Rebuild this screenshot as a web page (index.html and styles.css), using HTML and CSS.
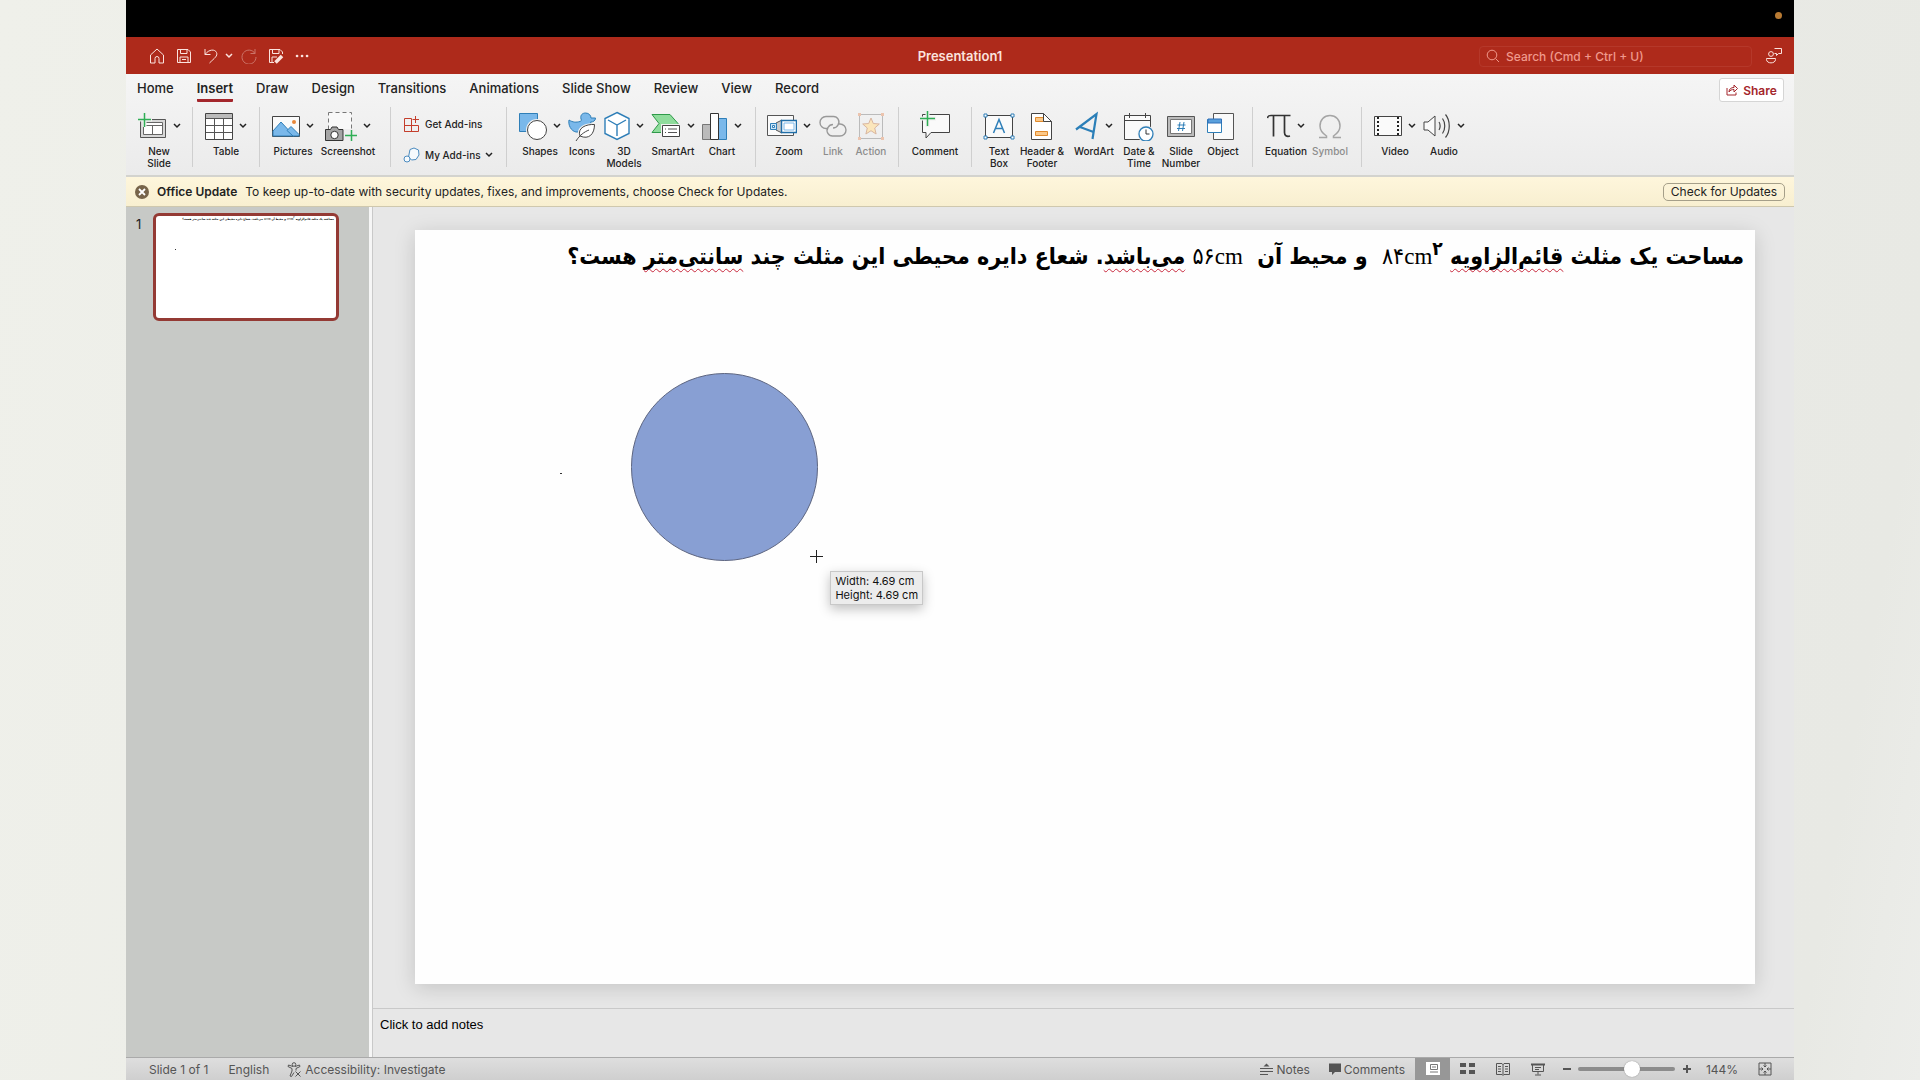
FILE: index.html
```html
<!DOCTYPE html>
<html lang="en">
<head>
  <meta charset="UTF-8">
  <title>Presentation1</title>
  <link rel="stylesheet" href="styles.css">
</head>
<body>
  <svg class="defs" aria-hidden="true">
    <symbol id="chev" viewBox="0 0 8 6"><path d="M1 1l3 3 3-3" fill="none" stroke="currentColor" stroke-width="1.5"/></symbol>
  </svg>

  <div class="app">
    <div class="menubar"><span class="mic-dot"></span></div>

    <header class="titlebar">
      <div class="quick">
        <button aria-label="Home"><svg width="16" height="16" viewBox="0 0 16 16"><path d="M1.500 7L8 1l6.500 6v8H10V10.500a2 2 0 0 0-4 0V15H1.500z"/></svg></button>
        <button aria-label="Save"><svg width="16" height="16" viewBox="0 0 16 16"><path d="M1.500 1.500h10.500l2.500 2.500v10.500h-13zM4.500 1.500v4h6.500v-4M4 14.500V9h8v5.500M6 11.500h4"/></svg></button>
        <button aria-label="Undo"><svg width="16" height="16" viewBox="0 0 16 16"><path d="M2 1v5.500h5.500M2 6.500C6 1 12 1 13.500 4.500S11.500 10 6.500 15"/></svg></button>
        <button class="q-chev" aria-label="Undo list"><svg width="8" height="6"><use href="#chev"/></svg></button>
        <button class="dim" aria-label="Redo"><svg width="16" height="16" viewBox="0 0 16 16"><path d="M14 1v4.500H9.500M14 5.500A7 7 0 1 0 15 9"/></svg></button>
        <button aria-label="Save as"><svg width="16" height="16" viewBox="0 0 16 16"><path d="M6 14.500H1.500v-13H12L14.500 4v2M4.500 1.500v4H11v-4M4 14.500V9h5"/><path d="M7.500 14.500L14 8" stroke-width="3.500"/></svg></button>
        <button aria-label="More"><svg width="14" height="16" viewBox="0 0 14 16"><path d="M2 8h.1M7 8h.1M12 8h.1" stroke-width="2.600" stroke-linecap="round"/></svg></button>
      </div>
      <h1>Presentation1</h1>
      <div class="title-right">
        <label class="search">
          <svg width="14" height="14" viewBox="0 0 14 14"><circle cx="6" cy="6" r="4.800"/><path d="M9.500 9.500L13 13"/></svg>
          <input type="text" placeholder="Search (Cmd + Ctrl + U)" aria-label="Search">
        </label>
        <button aria-label="Presence"><svg width="18" height="18" viewBox="0 0 18 18"><circle cx="6" cy="7" r="2.400"/><path d="M1.500 11.500h9v1c0 4.500-9 4.500-9 0zM9.500 1.500h7v5h-3l-2 2v-2h-2"/></svg></button>
      </div>
    </header>

    <div class="ribbon">
      <div class="tab-row">
        <nav class="tabs">
          <a href="#">Home</a>
          <a href="#" class="active">Insert</a>
          <a href="#">Draw</a>
          <a href="#">Design</a>
          <a href="#">Transitions</a>
          <a href="#">Animations</a>
          <a href="#">Slide Show</a>
          <a href="#">Review</a>
          <a href="#">View</a>
          <a href="#">Record</a>
        </nav>
        <button class="share"><svg width="12" height="12" viewBox="0 0 12 12"><path d="M1 4v7h9V8.500M3 8c0-3 2-4.500 5-4.500V1l3.500 3.500L8 8V5.500C6 5.500 4 6 3 8z"/></svg>Share</button>
      </div>

      <div class="tools">
        <div class="group">
          <button class="tool">
            <span class="ico"><svg width="30" height="30" viewBox="0 0 30 30"><path d="M3.500 8.500h25v18h-25z" fill="#d8d8d8" stroke="#555"/><path d="M6.500 11.500h19v12h-19z" fill="#fff" stroke="#666"/><path d="M6 14.500h20M15.500 14v10" stroke="#666"/><path d="M0 8.500h15M7.500 1v15" stroke="#f0f0f0" stroke-width="4"/><path d="M1 8.500h13M7.500 2v14" stroke="#2fae55" stroke-width="1.500"/></svg><svg class="chev"><use href="#chev"/></svg></span>
            <span class="lbl">New<br>Slide</span>
          </button>
        </div>
        <div class="group">
          <button class="tool">
            <span class="ico"><svg width="28" height="30" viewBox="0 0 28 30"><path d="M.5 2.500h27v26H.5z" fill="#fff" stroke="#444"/><path d="M1 3h26v4H1z" fill="#bbb"/><path d="M1 7.500h26M1 14.500h26M1 21.500h26M9.500 7v21M18.500 7v21" stroke="#555"/></svg><svg class="chev"><use href="#chev"/></svg></span>
            <span class="lbl">Table</span>
          </button>
        </div>
        <div class="group">
          <button class="tool">
            <span class="ico"><svg width="28" height="30" viewBox="0 0 28 30"><path d="M.5 5.500h27v20H.5z" fill="#fafafa" stroke="#444"/><path d="M1 20l8-9 13 14H1z" fill="#7ab8ea" stroke="#2f7fb8"/><path d="M15 19.500l4-4 8 8v1.500h-6z" fill="#7ab8ea" stroke="#2f7fb8"/><circle cx="22" cy="11" r="2" fill="#e8873a"/></svg><svg class="chev"><use href="#chev"/></svg></span>
            <span class="lbl">Pictures</span>
          </button>
          <button class="tool xl">
            <span class="ico"><svg width="32" height="30" viewBox="0 0 32 30"><path d="M3.500 1.500h23v24h-23z" fill="#f8f8f8" stroke="#777" stroke-dasharray="4 3"/><path d="M.5 18.500h5l1.500-2.500h5l1.500 2.500h4.500v11H.5z" fill="#a5a5a5" stroke="#333"/><circle cx="9.500" cy="24" r="3.700" fill="#fff" stroke="#333"/><path d="M19 18h13v12H19z" fill="#eee"/><path d="M20 24.500h12M26.500 19v11" stroke="#2fae55" stroke-width="1.500"/></svg><svg class="chev"><use href="#chev"/></svg></span>
            <span class="lbl">Screenshot</span>
          </button>
        </div>
        <div class="group addins">
          <button><svg width="18" height="18" viewBox="0 0 18 18"><path d="M1.500 3.500h7v13h-7zM1.500 10.500h14v6h-14M8.500 10v6.500M12.500 1v7M9.500 4.500h6.500" stroke="#c43e2c" fill="none"/></svg>Get Add-ins</button>
          <button><svg width="18" height="18" viewBox="0 0 18 18"><path d="M7 3.500L11 2l4.500 2L16 9l-3 4.500-4.500.5-3-3z" stroke="#4b8bbf" fill="#f6fafd"/><circle cx="4" cy="13" r="3" stroke="#4b8bbf" fill="#f6fafd"/></svg>My Add-ins<svg class="chev"><use href="#chev"/></svg></button>
        </div>
        <div class="group">
          <button class="tool">
            <span class="ico"><svg width="28" height="30" viewBox="0 0 28 30"><path d="M.5 2.500h18v18H.5z" fill="#7ab8ea" stroke="#2f7fb8"/><circle cx="18" cy="19" r="11" fill="#f0f0f0"/><circle cx="18" cy="19" r="9.500" fill="#fff" stroke="#444"/></svg><svg class="chev"><use href="#chev"/></svg></span>
            <span class="lbl">Shapes</span>
          </button>
          <button class="tool sm">
            <span class="ico"><svg width="28" height="30" viewBox="0 0 28 30"><path d="M1 9c4 2.500 7 2.500 11 1.500C13 10 14 9.500 13 8c-1-4 1.500-6 4.500-6C21 2 23 4.500 23 7h4.500c0 3-2.500 4-5 4 2 3 .5 8-3 10H8C3 20 0 14 1 9z" fill="#7ab8ea" stroke="#2f7fb8"/><path d="M9 29l3-4c-3-8 6-12 15.500-11.500C27.500 23 22 29 12 25" fill="#fff" stroke="#f0f0f0" stroke-width="3"/><path d="M8 30c4-6 8-9 13-11M12 25c-3-8 6-12 14.500-11.500C26.500 23 21 29 12 25z" fill="#fff" stroke="#444"/></svg></span>
            <span class="lbl">Icons</span>
          </button>
          <button class="tool">
            <span class="ico"><svg width="26" height="30" viewBox="0 0 26 30"><path d="M13 1.500L25 7.500v15l-12 6-12-6v-15z" fill="#fff" stroke="#2f7fb8" stroke-width="1.400"/><path d="M4 9l9 5 9-5M13 14v11" fill="none" stroke="#2f7fb8" stroke-width="1.400"/></svg><svg class="chev"><use href="#chev"/></svg></span>
            <span class="lbl">3D<br>Models</span>
          </button>
          <button class="tool lg">
            <span class="ico"><svg width="30" height="30" viewBox="0 0 30 30"><path d="M1 3.500h18l8 9-8 9H1l7-9z" fill="#8fdc9c" stroke="#2f9a4a"/><path d="M10 13h20v14H10z" fill="#f0f0f0"/><path d="M11.500 14.500h17v11h-17z" fill="#fff" stroke="#444"/><path d="M14 18h1M17 18h9M14 21.500h1M17 21.500h9" stroke="#555"/></svg><svg class="chev"><use href="#chev"/></svg></span>
            <span class="lbl">SmartArt</span>
          </button>
          <button class="tool">
            <span class="ico"><svg width="26" height="30" viewBox="0 0 26 30"><path d="M.5 13.500h8v15h-8z" fill="#bbb" stroke="#777"/><path d="M16.500 7.500h8v21h-8z" fill="#7ab8ea" stroke="#2f7fb8"/><path d="M8.500 2.500h8v26h-8z" fill="#fff" stroke="#333"/></svg><svg class="chev"><use href="#chev"/></svg></span>
            <span class="lbl">Chart</span>
          </button>
        </div>
        <div class="group">
          <button class="tool">
            <span class="ico"><svg width="30" height="30" viewBox="0 0 30 30"><path d="M.5 4.500h26v20H.5z" fill="#fafafa" stroke="#555"/><path d="M9 12l6-3v13l-6-3z" fill="#ccc" stroke="#555"/><path d="M3.500 12.500h6v6h-6z" fill="#cde5f7" stroke="#2f7fb8"/><path d="M5.500 14.500h2v2h-2z" fill="#fff" stroke="#2f7fb8"/><path d="M14.500 9.500h15v12h-15z" fill="#fff" stroke="#1f6ea8" stroke-width="1.500"/><path d="M17 12h10v7H17z" fill="#fff" stroke="#7ab8ea"/></svg><svg class="chev"><use href="#chev"/></svg></span>
            <span class="lbl">Zoom</span>
          </button>
          <button class="tool mid" disabled>
            <span class="ico"><svg width="28" height="30" viewBox="0 0 28 30"><path d="M9 17.500H7A5.500 5.500 0 0 1 7 5.500h7a5.500 5.500 0 0 1 5 8.500c-1 2-2.500 3-5 3M19 13h2a5.500 5.500 0 0 1 0 12h-7a5.500 5.500 0 0 1-5-8.500c1-2 2.500-3 5-3" fill="none" stroke="#999" stroke-width="1.400"/></svg></span>
            <span class="lbl">Link</span>
          </button>
          <button class="tool xs" disabled>
            <span class="ico"><svg width="28" height="30" viewBox="0 0 28 30"><path d="M2.500 3.500h23v24h-23z" fill="none" stroke="#bbb"/><path d="M1 2h3v3H1zM24 2h3v3h-3zM1 26h3v3H1zM24 26h3v3h-3z" fill="#ecc4ae"/><path d="M14 7l2.300 5.500 6 .5-4.600 4 1.400 6-5.100-3.300L8.900 23l1.400-6-4.600-4 6-.5z" fill="#fbe6bb" stroke="#d9b6a0"/></svg></span>
            <span class="lbl">Action</span>
          </button>
        </div>
        <div class="group">
          <button class="tool lg">
            <span class="ico"><svg width="30" height="30" viewBox="0 0 30 30"><path d="M2.500 3.500h27v18H11l-5 5.500v-5.500H2.500z" fill="#fafafa" stroke="#444"/><path d="M0 7.500h16M7.500 0v16" stroke="#f0f0f0" stroke-width="4"/><path d="M0 7.500h15M7.500 0v15" stroke="#2fae55" stroke-width="1.500"/></svg></span>
            <span class="lbl">Comment</span>
          </button>
        </div>
        <div class="group">
          <button class="tool xs">
            <span class="ico"><svg width="32" height="30" viewBox="0 0 32 30"><path d="M2.500 4.500h27v22h-27z" fill="#fafafa" stroke="#444"/><path d="M1 3h3v3H1zM28 3h3v3h-3zM1 25h3v3H1zM28 25h3v3h-3z" fill="#fff" stroke="#2f7fb8"/><path d="M10.500 22L16 8.500 21.500 22M12.500 17.500h7" fill="none" stroke="#2f7fb8" stroke-width="1.500"/></svg></span>
            <span class="lbl">Text<br>Box</span>
          </button>
          <button class="tool lg">
            <span class="ico"><svg width="22" height="30" viewBox="0 0 22 30"><path d="M.5 2.500h12l8 8v18H.5z" fill="#fff" stroke="#444"/><path d="M4.500 6.500h8v4h-8zM4.500 20.500h12v4h-12z" fill="#fbc889" stroke="#e08a2c"/><path d="M12.500 2.500v8h8z" fill="#fff" stroke="#444"/></svg></span>
            <span class="lbl">Header &amp;<br>Footer</span>
          </button>
          <button class="tool lg">
            <span class="ico"><svg width="24" height="30" viewBox="0 0 24 30"><path d="M1 18.500L21.500 3 17.500 28M5 16l13.500 5" fill="none" stroke="#2b7fb8" stroke-width="2.200"/></svg><svg class="chev"><use href="#chev"/></svg></span>
            <span class="lbl">WordArt</span>
          </button>
          <button class="tool sm">
            <span class="ico"><svg width="30" height="30" viewBox="0 0 30 30"><path d="M.5 4.500h26v24H.5z" fill="#fafafa" stroke="#444"/><path d="M.5 9.500h26M5.500 2v5M21.500 2v5" stroke="#444"/><circle cx="22" cy="23" r="8.500" fill="#f0f0f0"/><circle cx="22" cy="23" r="7" fill="#fff" stroke="#2f7fb8" stroke-width="1.300"/><path d="M22 18.500V23h3.500" fill="none" stroke="#333"/></svg></span>
            <span class="lbl">Date &amp;<br>Time</span>
          </button>
          <button class="tool">
            <span class="ico"><svg width="28" height="30" viewBox="0 0 28 30"><path d="M.5 5.500h27v20H.5z" fill="#bbb" stroke="#555"/><path d="M3.500 8.500h21v14h-21z" fill="#fff" stroke="#777"/><path d="M13 11l-1.500 9M17 11l-1.500 9M10.500 14h8M10 17.500h8" stroke="#2f7fb8"/></svg></span>
            <span class="lbl">Slide<br>Number</span>
          </button>
          <button class="tool sm">
            <span class="ico"><svg width="32" height="30" viewBox="0 0 32 30"><path d="M6.500 2.500h20v26h-20z" fill="#fafafa" stroke="#555"/><path d="M.5 8.500h14v13H.5z" fill="#fff" stroke="#2f7fb8"/><path d="M1 8h13.500v4H1z" fill="#5aa0dc" stroke="#2f6fb8"/></svg></span>
            <span class="lbl">Object</span>
          </button>
        </div>
        <div class="group">
          <button class="tool">
            <span class="ico"><svg width="24" height="30" viewBox="0 0 24 30"><path d="M.5 7C1 4.500 2 4.500 4 4.500h19.500M6.500 5v20.500M17.500 5v16.500c0 3 2 4.500 5.500 3.500" fill="none" stroke="#333" stroke-width="1.700"/></svg><svg class="chev"><use href="#chev"/></svg></span>
            <span class="lbl">Equation</span>
          </button>
          <button class="tool mid" disabled>
            <span class="ico"><svg width="24" height="30" viewBox="0 0 24 30"><path d="M1 26.500h7.500V25C4 22 2 18.500 2 15 2 9 6 4.500 12 4.500S22 9 22 15c0 3.500-2 7-6.500 10v1.500H23" fill="none" stroke="#a5a5a5" stroke-width="1.500"/></svg></span>
            <span class="lbl">Symbol</span>
          </button>
        </div>
        <div class="group last">
          <button class="tool">
            <span class="ico"><svg width="28" height="30" viewBox="0 0 28 30"><path d="M.5 5.500h27v19H.5z" fill="#fafafa" stroke="#444"/><path d="M4 6v18M24 6v18" stroke="#222" stroke-width="2" stroke-dasharray="2 2"/></svg><svg class="chev"><use href="#chev"/></svg></span>
            <span class="lbl">Video</span>
          </button>
          <button class="tool lg">
            <span class="ico"><svg width="28" height="30" viewBox="0 0 28 30"><path d="M1 11h4l7-6v20l-7-6H1z" fill="#fafafa" stroke="#444"/><path d="M16 11c1.500 2 1.500 6 0 8M19.500 7.500c3 4 3 11 0 15M22.500 3.500c5 6 5 17 0 23" fill="none" stroke="#444" stroke-width="1.200"/></svg><svg class="chev"><use href="#chev"/></svg></span>
            <span class="lbl">Audio</span>
          </button>
        </div>
      </div>
    </div>

    <div class="message">
      <button class="close" aria-label="Close"><svg width="14" height="14" viewBox="0 0 14 14"><circle cx="7" cy="7" r="7" fill="#77644a"/><path d="M4 4l6 6M10 4l-6 6" stroke="#fff" stroke-width="1.800"/></svg></button>
      <b>Office Update</b>
      <span>To keep up-to-date with security updates, fixes, and improvements, choose Check for Updates.</span>
      <button class="check">Check for Updates</button>
    </div>

    <div class="workspace">
      <aside class="sidebar">
        <span class="num">1</span>
        <div class="thumb">
          <p class="question" dir="rtl" lang="fa">مساحت یک مثلث قائم‌الزاویه <span class="unit" dir="ltr">۸۴cm<sup>۲</sup></span> و محیط آن <span class="unit" dir="ltr">۵۶cm</span> می‌باشد. شعاع دایره محیطی این مثلث چند سانتی‌متر هست؟</p>
          <span class="speck"></span>
        </div>
      </aside>

      <main class="main">
        <div class="stage">
          <div class="slide">
            <p class="question" dir="rtl" lang="fa">مساحت یک مثلث <u>قائم‌الزاویه</u> <span class="unit" dir="ltr">۸۴cm<sup>۲</sup></span>&nbsp; و محیط آن &nbsp;<span class="unit" dir="ltr">۵۶cm</span> <u>می‌باشد</u>. شعاع دایره محیطی این مثلث چند <u>سانتی‌متر</u> هست؟</p>
            <span class="speck"></span>
            <div class="circle"></div>
            <svg class="cross" viewBox="0 0 13 13"><path d="M6.500 0v13M0 6.500h13" stroke="#222"/></svg>
            <div class="size-tip">Width: 4.69 cm<br>Height: 4.69 cm</div>
          </div>
        </div>
        <div class="notes">Click to add notes</div>
      </main>
    </div>

    <footer class="status">
      <span class="count">Slide 1 of 1</span>
      <button class="lang">English</button>
      <button class="access"><svg width="15" height="15" viewBox="0 0 15 15"><circle cx="7" cy="2.500" r="1.800"/><path d="M6 4.500L1.500 3 1 4.500l4 2V9l-2 5 1.500.5 2.500-4M8 4.500L12.500 3l.5 1.500-4 2v2M8.500 9.500l5 5M13.500 9.500l-5 5"/></svg>Accessibility: Investigate</button>
      <div class="right">
        <button class="st-notes"><svg width="13" height="13" viewBox="0 0 13 13"><path d="M0 5.500h13M0 8.500h13M0 11.500h8" /><path d="M3.500 3.500l3-3 3 3z" fill="#555" stroke="none"/></svg>Notes</button>
        <button class="st-comm"><svg width="12" height="12" viewBox="0 0 12 12"><path d="M0 .5h12v8.500H6L3 12V9H0z" fill="#555" stroke="none"/></svg>Comments</button>
        <button class="view on" aria-label="Normal"><svg width="14" height="14" viewBox="0 0 14 14"><path d="M0 0h14v13H0z" fill="#fff" stroke="none"/><path d="M4.500 2.500h7v5h-7zM4 10h8" stroke="#777"/><path d="M6 5h4" stroke="#777"/></svg></button>
        <button class="view" aria-label="Slide sorter"><svg width="15" height="12" viewBox="0 0 15 12"><path d="M0 0h6v4H0zM9 0h6v4H9zM0 7h6v4H0zM9 7h6v4H9z" fill="#555" stroke="none"/></svg></button>
        <button class="view" aria-label="Reading view"><svg width="14" height="13" viewBox="0 0 14 13"><path d="M.5.5H6l1 1 1-1h5.500v11H8l-1 1-1-1H.5zM7 1v11M2 3.500h3M2 6h3M2 8.500h3M9 3.500h3M9 6h3M9 8.500h3"/></svg></button>
        <button class="view" aria-label="Slide show"><svg width="14" height="13" viewBox="0 0 14 13"><path d="M0 1.500h14" stroke-width="2"/><path d="M1.500 2v6.500h11V2M4 4.500h6M4 6.500h4M7 8.500v3M4 12h6"/></svg></button>
        <button class="zoom-btn" aria-label="Zoom out"><svg width="8" height="8" viewBox="0 0 8 8"><path d="M0 4h8" stroke-width="2"/></svg></button>
        <input type="range" min="0" max="100" value="57" aria-label="Zoom">
        <button class="zoom-btn" aria-label="Zoom in"><svg width="8" height="8" viewBox="0 0 8 8"><path d="M0 4h8M4 0v8" stroke-width="2"/></svg></button>
        <button class="pct">144%</button>
        <button class="fit" aria-label="Fit slide"><svg width="14" height="14" viewBox="0 0 14 14"><path d="M1 1h12v12H1zM7 1v4M7 9v4M1 7h4M9 7h4M5.500 3.500L7 5l1.500-1.500M5.500 10.500L7 9l1.500 1.500M3.500 5.500L5 7 3.500 8.500M10.500 5.500L9 7l1.500 1.500"/></svg></button>
      </div>
    </footer>
  </div>
</body>
</html>
```

FILE: styles.css
```css
* {
  box-sizing: border-box;
}
body {
  margin: 0;
  padding: 0 126px;
  height: 100vh;
  background: linear-gradient(100deg, #eff0ea 0%, #ebece7 50%, #e8e9e4 94%, #ecedea 100%);
  font-family: Inter, "Noto Sans", sans-serif;
  font-size: 12px;
  color: #222;
  overflow: hidden;
}
button, input {
  font: inherit;
  color: inherit;
  border: none;
  background: none;
  padding: 0;
}
svg {
  flex: none;
}
.defs {
  position: absolute;
  width: 0;
  height: 0;
}
.app {
  height: 100%;
  display: flex;
  flex-direction: column;
}

/* top strip */
.menubar {
  height: 37px;
  background: #000;
  display: flex;
  justify-content: flex-end;
  align-items: center;
  padding: 0 12px 6px;
}
.mic-dot {
  width: 7px;
  height: 7px;
  border-radius: 50%;
  background: #b87a33;
}
.titlebar {
  height: 37px;
  background: #ae2a1b;
  display: grid;
  grid-template-columns: 1fr auto 1fr;
  align-items: center;
  padding: 1px 11px 0 23px;
  color: #fbe3de;
}
.titlebar svg {
  display: block;
  fill: none;
  stroke: currentColor;
  stroke-width: 1;
}
.titlebar h1 {
  margin: 0;
  padding-right: 12px;
  font-size: 13px;
  font-weight: 600;
}
.quick {
  display: flex;
  align-items: center;
  gap: 11px;
}
.q-chev {
  margin: 0 -3px 0 -5px;
}
.dim {
  opacity: 0.4;
}
.title-right {
  display: flex;
  justify-content: flex-end;
  align-items: center;
  gap: 13px;
}
.search {
  width: 273px;
  height: 21px;
  display: flex;
  align-items: center;
  gap: 6px;
  padding: 0 6px;
  border: 1px solid #b5382a;
  border-radius: 4px;
  color: #f0998c;
}
.search input {
  flex: 1;
  min-width: 0;
  font-weight: 500;
  outline: none;
}
.search input::placeholder {
  color: #f0998c;
  opacity: 1;
}

/* ribbon */
.ribbon {
  height: 103px;
  background: linear-gradient(#f5f5f5, #ebebeb);
  border-bottom: 2px solid #d3d3ce;
}
.tab-row {
  height: 33px;
  display: flex;
  justify-content: space-between;
  padding: 4px 10px 0 11px;
}
.tabs {
  display: flex;
  gap: 23px;
}
.tabs a {
  color: #222;
  text-decoration: none;
  font-size: 13px;
  font-weight: 500;
  line-height: 20px;
  height: 24px;
}
.tabs .active {
  font-weight: 600;
  border-bottom: 3px solid #a4262c;
  border-radius: 1px;
}
.share {
  width: 65px;
  height: 24px;
  display: flex;
  align-items: center;
  justify-content: center;
  gap: 5px;
  background: #fff;
  border: 1px solid #d5d5d5;
  border-radius: 3px;
  color: #a4262c;
  font-weight: 600;
}
.share svg {
  fill: none;
  stroke: #a4262c;
}
.tools {
  display: flex;
  height: 60px;
}
.group {
  display: flex;
  padding: 0 10px;
  border-right: 1px solid #cfcfcf;
}
.group.last {
  border: none;
}
.tool {
  width: 46px;
  display: flex;
  flex-direction: column;
  align-items: center;
  font-size: 10px;
  font-weight: 500;
  line-height: 12px;
  white-space: nowrap;
}
.tool.xs { width: 34px; }
.tool.sm { width: 38px; }
.tool.mid { width: 42px; }
.tool.lg { width: 52px; }
.tool.xl { width: 64px; }
.tool:disabled .lbl {
  color: #8c8c8c;
}
.ico {
  flex: none;
  height: 38px;
  display: flex;
  align-items: center;
  gap: 6px;
}
.chev {
  width: 8px;
  height: 6px;
}
.addins {
  width: 116px;
  flex-direction: column;
  padding: 1px 12px;
}
.addins button {
  flex: none;
  display: flex;
  align-items: center;
  gap: 4px;
  height: 31px;
  font-size: 10px;
  font-weight: 500;
  white-space: nowrap;
}

/* update message */
.message {
  height: 30px;
  display: flex;
  align-items: center;
  gap: 8px;
  padding: 0 9px;
  background: linear-gradient(#fef6dc, #f8efd0);
  border-bottom: 1px solid #cfc8ae;
}
.message b {
  font-weight: 600;
}
.message .close {
  display: flex;
}
.check {
  margin-left: auto;
  width: 122px;
  height: 18px;
  border: 1px solid #a59f89;
  border-radius: 5px;
}

/* slides */
.workspace {
  flex: 1;
  display: flex;
  min-height: 0;
}
.sidebar {
  width: 246px;
  display: flex;
  align-items: flex-start;
  gap: 9px;
  padding: 6px 10px;
  background: #c7c9c6;
  border-right: 3px solid #f6f6f6;
}
.num {
  width: 8px;
  font-size: 13px;
  line-height: 22px;
}
.thumb {
  position: relative;
  width: 186px;
  aspect-ratio: 185 / 107;
  background: #fff;
  border: 3px solid #943a34;
  border-radius: 6px;
  overflow: hidden;
}
.main {
  flex: 1;
  display: flex;
  flex-direction: column;
  background: #e7e7e7;
  border-left: 1px solid #c9c9c9;
  min-width: 0;
}
.stage {
  flex: 1;
  padding: 23px 39px 0 42px;
}
.slide {
  position: relative;
  aspect-ratio: 16 / 9;
  background: #fefefe;
  box-shadow: 0 4px 20px rgba(0, 0, 0, 0.15);
}
.question {
  margin: 0;
  padding: 2px 11px;
  font-family: "DejaVu Sans Condensed", "DejaVu Sans", sans-serif;
  font-size: 23px;
  font-weight: 700;
  line-height: 48px;
  color: #000;
  white-space: nowrap;
}
.question u {
  text-decoration: underline wavy #c8283c 1px;
  text-underline-offset: 4px;
  text-decoration-skip-ink: none;
}
.unit {
  font-family: "Liberation Serif", "DejaVu Sans Condensed", serif;
  font-weight: 400;
}
.unit sup {
  font-weight: 700;
  line-height: 0;
}
.thumb .question {
  padding: 0 2px;
  font-size: 3px;
  line-height: 7px;
}
.speck {
  position: absolute;
  left: 10.8%;
  top: 32.2%;
  width: 2px;
  height: 1px;
  background: #333;
}
.thumb .speck {
  width: 1px;
}
.circle {
  position: absolute;
  left: 16.1%;
  top: 19%;
  width: 14%;
  aspect-ratio: 1;
  border: 1px solid #5d6580;
  border-radius: 50%;
  background: #889fd3;
}
.cross {
  position: absolute;
  left: 29.5%;
  top: 42.5%;
  width: 13px;
  height: 13px;
}
.size-tip {
  position: absolute;
  left: 31%;
  top: 45.2%;
  padding: 2px 4px;
  background: #ececec;
  border: 1px solid #c8c8c8;
  box-shadow: 0 4px 12px rgba(0, 0, 0, 0.25);
  font-size: 11px;
  line-height: 14px;
  color: #111;
  white-space: nowrap;
}
.notes {
  height: 49px;
  padding: 6px 7px;
  border-top: 1px solid #c9c9c9;
  font-family: "Liberation Sans", sans-serif;
  font-size: 13px;
  line-height: 20px;
  color: #000;
}

/* status bar */
.status {
  height: 23px;
  display: flex;
  align-items: center;
  padding: 0 22px 0 23px;
  background: linear-gradient(#dedede, #cfcfcf);
  border-top: 1px solid #aaa;
  color: #555;
}
.status svg {
  fill: none;
  stroke: #555;
}
.status button {
  display: flex;
  align-items: center;
  justify-content: center;
  gap: 3px;
}
.lang {
  margin: 0 18px 0 20px;
}
.right {
  margin-left: auto;
  height: 100%;
  display: flex;
  align-items: center;
}
.st-notes {
  margin-right: 19px;
}
.st-comm {
  margin-right: 10px;
}
.view {
  width: 35px;
  height: 100%;
}
.view.on {
  background: #979797;
}
.zoom-btn {
  width: 23px;
  height: 100%;
}
.status input {
  -webkit-appearance: none;
  appearance: none;
  width: 97px;
  height: 4px;
  margin: 0;
  border-radius: 2px;
  background: #8c8c8c;
}
.status input::-webkit-slider-thumb {
  -webkit-appearance: none;
  width: 16px;
  height: 16px;
  border-radius: 50%;
  background: #fff;
  box-shadow: 0 0 1px #666;
}
.pct {
  width: 48px;
}
.fit {
  width: 14px;
  margin-left: 12px;
}
```
